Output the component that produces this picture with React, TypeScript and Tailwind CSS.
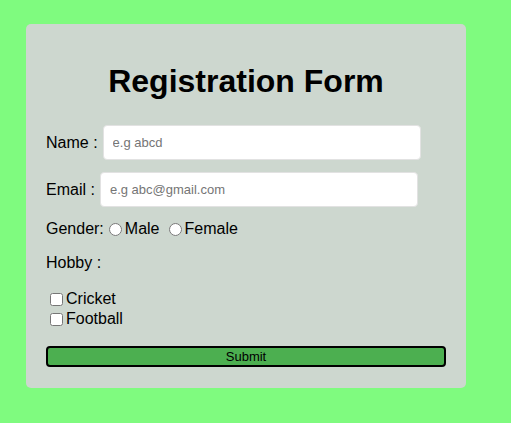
export default function App() {
  return (
    <div className="min-h-[423px] w-full bg-[#7ffb7f] pt-6 pl-[26px] font-['Liberation_Sans',Arial,sans-serif] text-black">
      <form className="w-[440px] rounded-[5px] bg-[#cdd7cf] px-5 pb-[20px]" onSubmit={(e) => e.preventDefault()}>
        {/* Title */}
        <h1 className="pt-[39px] text-center text-[32px] font-bold leading-[37px]">Registration Form</h1>

        <div className="mt-[25px] flex items-center text-base">
          <label htmlFor="name">Name :</label>
          <input
            id="name"
            type="text"
            placeholder="e.g abcd"
            className="ml-[5px] h-[35px] w-[318px] rounded-[4px] border border-[#e2e2e2] bg-white px-[9px] text-[13px] outline-none placeholder:text-[#757575]"
          />
        </div>

        <div className="mt-[12px] flex items-center text-base">
          <label htmlFor="email">Email :</label>
          <input
            id="email"
            type="email"
            placeholder="e.g abc@gmail.com"
            className="ml-[5px] h-[35px] w-[318px] rounded-[4px] border border-[#e2e2e2] bg-white px-[9px] text-[13px] outline-none placeholder:text-[#757575]"
          />
        </div>

        <div className="mt-[13px] flex items-center text-base leading-[18px]">
          <span>Gender:</span>
          <input type="radio" name="gender" id="male" className="ml-[5px] mr-[3px] h-[13px] w-[13px]" />
          <label htmlFor="male">Male</label>
          <input type="radio" name="gender" id="female" className="ml-[9px] mr-[3px] h-[13px] w-[13px]" />
          <label htmlFor="female">Female</label>
        </div>

        <div className="mt-[16px] text-base leading-[18px]">Hobby :</div>

        <div className="mt-[17px] flex flex-col text-base leading-5">
          <div className="flex items-center">
            <input type="checkbox" id="cricket" className="ml-[4px] mr-[3px] h-[13px] w-[13px]" />
            <label htmlFor="cricket">Cricket</label>
          </div>
          <div className="flex items-center">
            <input type="checkbox" id="football" className="ml-[4px] mr-[3px] h-[13px] w-[13px]" />
            <label htmlFor="football">Football</label>
          </div>
        </div>

        <button
          type="submit"
          className="mt-[17px] h-[21px] w-[400px] rounded-[4px] border-2 border-black bg-[#4caf50] text-[13px] leading-none"
        >
          Submit
        </button>
      </form>
    </div>
  );
}
